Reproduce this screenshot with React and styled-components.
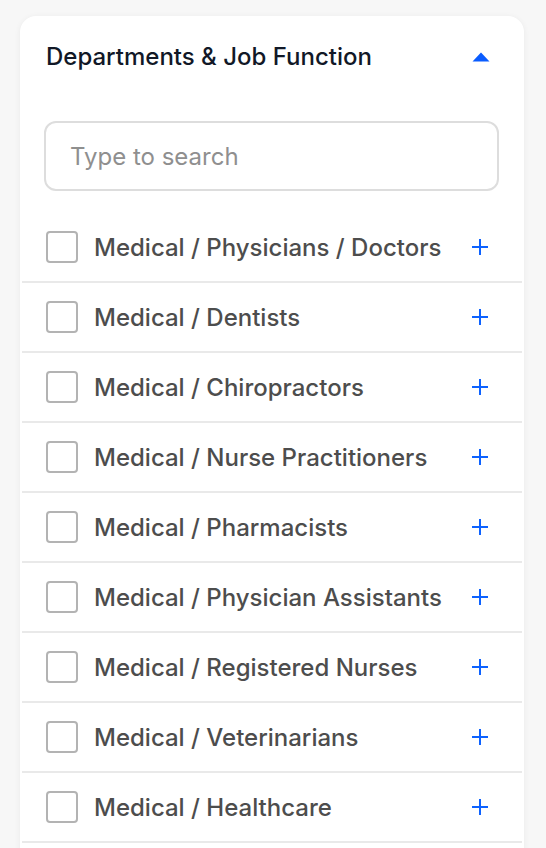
import React, { useState } from 'react'
import styled, { createGlobalStyle } from 'styled-components'

const GlobalStyle = createGlobalStyle`
    body {
        margin: 0;
        background: #f7f7f7;
        font-family: Inter, "Noto Sans", sans-serif;
    }
`

const departments = [
    'Medical / Physicians / Doctors',
    'Medical / Dentists',
    'Medical / Chiropractors',
    'Medical / Nurse Practitioners',
    'Medical / Pharmacists',
    'Medical / Physician Assistants',
    'Medical / Registered Nurses',
    'Medical / Veterinarians',
    'Medical / Healthcare',
]

const CaretUp = () => (
    <svg width="18" height="10" viewBox="0 0 18 10">
        <path d="M9 0.5 L17.5 9.5 L0.5 9.5 Z" fill="#0a5cff" />
    </svg>
)

const Plus = () => (
    <svg width="16" height="16" viewBox="0 0 16 16">
        <path d="M8 0 V16 M0 8 H16" stroke="#0d62ff" strokeWidth="2" />
    </svg>
)

const Option = ({ label, checked, onToggle }) => (
    <Row>
        <Checkbox checked={checked} onClick={onToggle} />
        <Label>{label}</Label>
        <AddButton>
            <Plus />
        </AddButton>
    </Row>
)

const App = () => {
    const [query, setQuery] = useState('')
    const [selected, setSelected] = useState({})

    const toggle = (name) => setSelected({ ...selected, [name]: !selected[name] })

    return (
        <>
            <GlobalStyle />
            <Card>
                <Header>
                    <Title>Departments &amp; Job Function</Title>
                    <CaretUp />
                </Header>
                <Search
                    type="text"
                    placeholder="Type to search"
                    value={query}
                    onChange={(e) => setQuery(e.target.value)}
                />
                <List>
                    {departments.map((name) => (
                        <Option
                            key={name}
                            label={name}
                            checked={!!selected[name]}
                            onToggle={() => toggle(name)}
                        />
                    ))}
                </List>
            </Card>
        </>
    )
}

const Card = styled.div`
    margin: 16px 22px 0 20px;
    background: #fff;
    border-radius: 16px;
    box-shadow: 0 1px 6px rgba(0, 0, 0, 0.06);
    padding: 25px 24px 24px 24px;
`

const Header = styled.div`
    display: flex;
    align-items: center;
    justify-content: space-between;
    height: 32px;
    padding: 0 10px 0 2px;
`

const Title = styled.h2`
    margin: 0;
    font-size: 24px;
    line-height: 32px;
    font-weight: 500;
    color: #111827;
`

const Search = styled.input`
    display: block;
    box-sizing: border-box;
    width: 455px;
    height: 70px;
    margin-top: 48px;
    padding: 0 24px;
    border: 2px solid #dddddd;
    border-radius: 12px;
    font-family: inherit;
    font-size: 24px;
    color: #333;
    outline: none;

    &::placeholder {
        color: #8f8f8f;
    }
`

const List = styled.div`
    margin: 22px -22px 0 -22px;
`

const Row = styled.div`
    display: flex;
    align-items: center;
    height: 68px;
    padding: 0 34px 0 24px;
    border-bottom: 2px solid #e9e9e9;
`

const Checkbox = styled.span`
    box-sizing: border-box;
    flex: none;
    width: 32px;
    height: 32px;
    border: 2px solid #b3b3b3;
    border-radius: 4px;
    background: ${({ checked }) => (checked ? '#0d62ff' : '#fff')};
    cursor: pointer;
`

const Label = styled.span`
    flex: 1;
    margin-left: 16px;
    font-size: 24px;
    font-weight: 500;
    color: #4d4d4d;
    white-space: nowrap;
`

const AddButton = styled.span`
    display: flex;
    flex: none;
    cursor: pointer;
`

export default App
